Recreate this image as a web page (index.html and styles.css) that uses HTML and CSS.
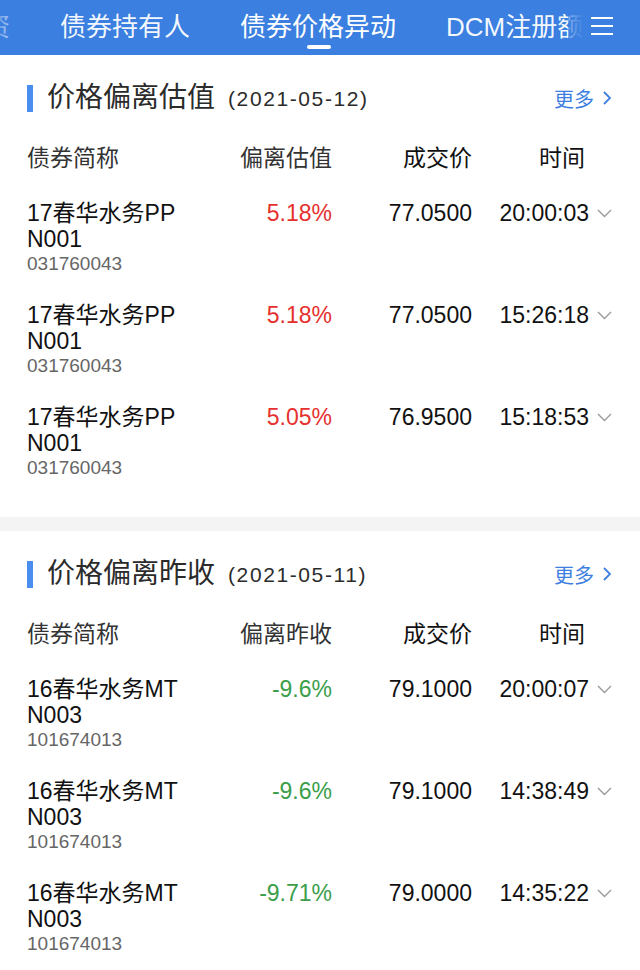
FILE: index.html
```html
<!DOCTYPE html>
<html lang="zh-CN">
<head>
<meta charset="utf-8">
<title>债券价格异动</title>
<link rel="stylesheet" href="styles.css">
</head>
<body>
<header class="nav">
  <div class="nav-track">
    <span class="tab">投资</span>
    <span class="tab">债券持有人</span>
    <span class="tab active">债券价格异动</span>
    <span class="tab">DCM注册额度</span>
  </div>
  <div class="fade-left"></div>
  <div class="fade-right">
    <svg class="menu" width="22" height="18" viewBox="0 0 22 18"><path d="M0 1h22M0 9h22M0 17h22" stroke="#fff" stroke-width="2"/></svg>
  </div>
</header>

<section class="card">
  <div class="card-head">
    <div class="title"><span class="bar"></span><span class="title-text">价格偏离估值</span><span class="date">(2021-05-12)</span></div>
    <a class="more">更多<svg width="10" height="16" viewBox="0 0 10 16"><path d="M2 2l6 6-6 6" fill="none" stroke="#3d7fe0" stroke-width="1.8"/></svg></a>
  </div>
  <div class="grid head-row">
    <span class="c-name">债券简称</span><span class="c-val">偏离估值</span><span class="c-price">成交价</span><span class="c-time h-time">时间</span><span></span>
  </div>
  <div class="grid row">
    <div class="c-name"><div class="name">17春华水务PPN001</div><div class="code">031760043</div></div>
    <span class="c-val up">5.18%</span><span class="c-price">77.0500</span><span class="c-time">20:00:03</span>
    <svg class="chev" width="15" height="9" viewBox="0 0 15 9"><path d="M1 1l6.5 6.5L14 1" fill="none" stroke="#9a9a9a" stroke-width="1.4"/></svg>
  </div>
  <div class="grid row">
    <div class="c-name"><div class="name">17春华水务PPN001</div><div class="code">031760043</div></div>
    <span class="c-val up">5.18%</span><span class="c-price">77.0500</span><span class="c-time">15:26:18</span>
    <svg class="chev" width="15" height="9" viewBox="0 0 15 9"><path d="M1 1l6.5 6.5L14 1" fill="none" stroke="#9a9a9a" stroke-width="1.4"/></svg>
  </div>
  <div class="grid row">
    <div class="c-name"><div class="name">17春华水务PPN001</div><div class="code">031760043</div></div>
    <span class="c-val up">5.05%</span><span class="c-price">76.9500</span><span class="c-time">15:18:53</span>
    <svg class="chev" width="15" height="9" viewBox="0 0 15 9"><path d="M1 1l6.5 6.5L14 1" fill="none" stroke="#9a9a9a" stroke-width="1.4"/></svg>
  </div>
</section>

<div class="sep"></div>

<section class="card">
  <div class="card-head">
    <div class="title"><span class="bar"></span><span class="title-text">价格偏离昨收</span><span class="date">(2021-05-11)</span></div>
    <a class="more">更多<svg width="10" height="16" viewBox="0 0 10 16"><path d="M2 2l6 6-6 6" fill="none" stroke="#3d7fe0" stroke-width="1.8"/></svg></a>
  </div>
  <div class="grid head-row">
    <span class="c-name">债券简称</span><span class="c-val">偏离昨收</span><span class="c-price">成交价</span><span class="c-time h-time">时间</span><span></span>
  </div>
  <div class="grid row">
    <div class="c-name"><div class="name">16春华水务MTN003</div><div class="code">101674013</div></div>
    <span class="c-val down">-9.6%</span><span class="c-price">79.1000</span><span class="c-time">20:00:07</span>
    <svg class="chev" width="15" height="9" viewBox="0 0 15 9"><path d="M1 1l6.5 6.5L14 1" fill="none" stroke="#9a9a9a" stroke-width="1.4"/></svg>
  </div>
  <div class="grid row">
    <div class="c-name"><div class="name">16春华水务MTN003</div><div class="code">101674013</div></div>
    <span class="c-val down">-9.6%</span><span class="c-price">79.1000</span><span class="c-time">14:38:49</span>
    <svg class="chev" width="15" height="9" viewBox="0 0 15 9"><path d="M1 1l6.5 6.5L14 1" fill="none" stroke="#9a9a9a" stroke-width="1.4"/></svg>
  </div>
  <div class="grid row">
    <div class="c-name"><div class="name">16春华水务MTN003</div><div class="code">101674013</div></div>
    <span class="c-val down">-9.71%</span><span class="c-price">79.0000</span><span class="c-time">14:35:22</span>
    <svg class="chev" width="15" height="9" viewBox="0 0 15 9"><path d="M1 1l6.5 6.5L14 1" fill="none" stroke="#9a9a9a" stroke-width="1.4"/></svg>
  </div>
</section>
</body>
</html>
```
FILE: styles.css
```css
* { box-sizing: border-box; }
html, body { margin: 0; padding: 0; background: #fff; }
body {
  font-family: "Liberation Sans", "Noto Sans CJK SC", sans-serif;
  color: #1a1a1a;
  width: 640px;
  overflow: hidden;
}

.nav {
  position: relative;
  height: 55px;
  background: #3b7fe0;
  overflow: hidden;
}
.nav-track {
  display: flex;
  gap: 50px;
  margin-left: -42px;
  white-space: nowrap;
  height: 55px;
  align-items: center;
  padding-bottom: 2px;
}
.tab {
  position: relative;
  font-size: 26px;
  line-height: 30px;
  color: rgba(255,255,255,0.95);
  flex: none;
}
.tab.active { color: #fff; }
.tab.active::after {
  content: "";
  position: absolute;
  left: 50%;
  top: 33px;
  width: 24px;
  height: 4px;
  margin-left: -11px;
  border-radius: 2px;
  background: #fff;
}
.fade-left {
  position: absolute;
  left: 0; top: 0;
  width: 22px; height: 55px;
  background: linear-gradient(to right, rgba(59,127,224,0.7), rgba(59,127,224,0));
}
.fade-right {
  position: absolute;
  right: 0; top: 0;
  width: 72px; height: 55px;
  background: linear-gradient(to right, rgba(59,127,224,0.6) 0, rgba(59,127,224,0.9) 12px, #3b7fe0 20px);
  display: flex;
  align-items: flex-start;
  justify-content: flex-end;
  padding: 17px 27px 0 0;
}

.card {
  padding: 23px 0 33px;
}
.card-head {
  display: flex;
  align-items: center;
  justify-content: space-between;
  height: 40px;
  padding: 0 28px 0 27px;
}
.title { display: flex; align-items: center; }
.bar {
  width: 6px;
  height: 27px;
  background: #4a8ff0;
  margin-right: 14px;
}
.title-text {
  font-size: 28px;
  line-height: 40px;
  color: #2b2b2b;
}
.date {
  font-size: 21px;
  line-height: 40px;
  color: #2b2b2b;
  margin-left: 13px;
  letter-spacing: 1.6px;
  padding-top: 2px;
}
.more {
  display: flex;
  align-items: center;
  gap: 8px;
  font-size: 20px;
  color: #3d7fe0;
}

.grid {
  display: grid;
  grid-template-columns: 155px 150px 140px 117px 23px;
  padding-left: 27px;
}
.head-row {
  margin-top: 20px;
  height: 40px;
  align-items: center;
  font-size: 23px;
  line-height: 40px;
  color: #333;
}
.row {
  padding-top: 22px;
  padding-bottom: 4px;
  font-size: 23px;
  line-height: 26px;
  align-items: start;
}
.c-val, .c-price, .c-time { text-align: right; white-space: nowrap; }
.h-time { padding-right: 4px; }
.name {
  word-break: break-all;
  color: #111;
}
.code {
  font-size: 19px;
  line-height: 24px;
  color: #666;
}
.up { color: #e5302e; }
.down { color: #3a9e4a; }
.c-price, .c-time { color: #111; }
.chev {
  margin: 9px 0 0 8px;
  display: block;
}

.sep {
  height: 14px;
  background: #f4f4f4;
}
```
